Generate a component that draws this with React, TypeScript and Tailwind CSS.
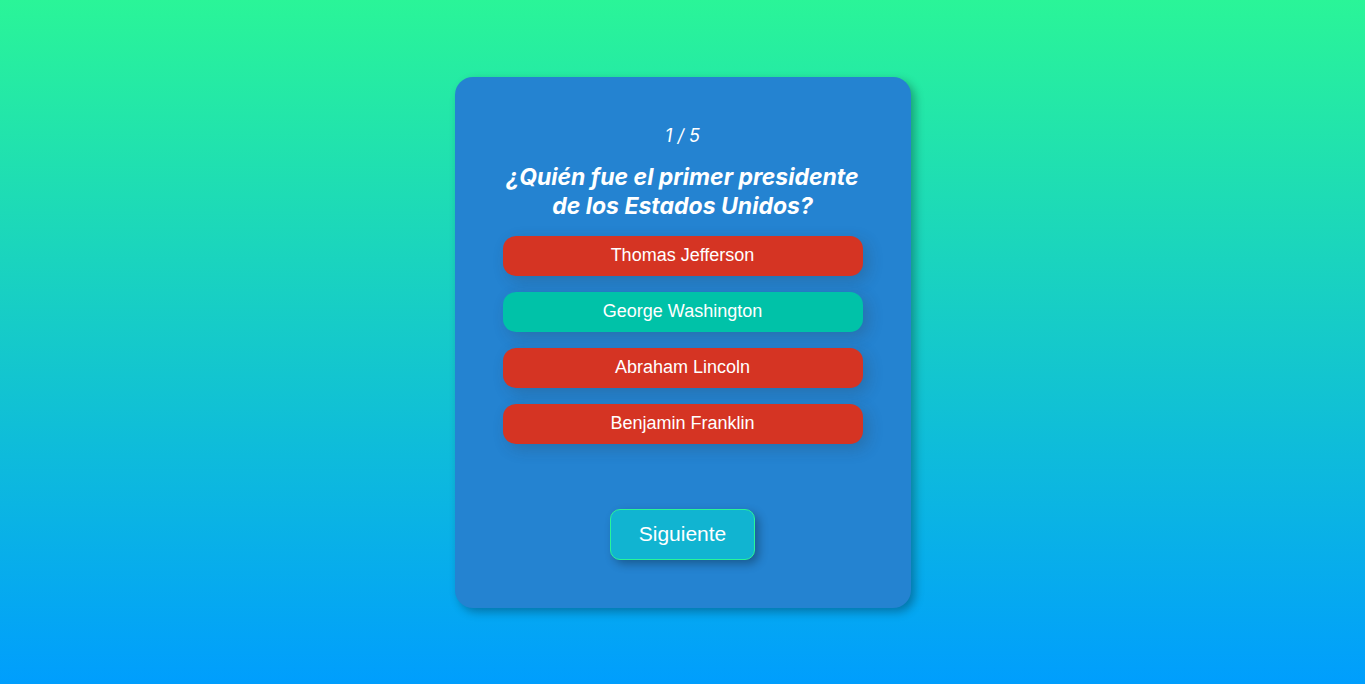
const answers = [
  { text: "Thomas Jefferson", correct: false },
  { text: "George Washington", correct: true },
  { text: "Abraham Lincoln", correct: false },
  { text: "Benjamin Franklin", correct: false },
];

export default function App() {
  return (
    <div className="flex min-h-screen items-center justify-center bg-linear-to-b/srgb from-[#2af598] to-[#009efd] font-['Inter',sans-serif] text-white">
      <main className="flex w-full max-w-[456px] flex-col items-center rounded-[18px] bg-[#2483d1] p-12 shadow-[4px_4px_10px_rgba(0,0,0,0.3)]">
        <p className="text-lg leading-[22px] italic">1 / 5</p>
        <h1 className="mt-4 text-center text-[23px] leading-[29px] font-bold italic">
          ¿Quién fue el primer presidente de los Estados Unidos?
        </h1>
        <div className="mt-[15px] flex w-full flex-col gap-4">
          {answers.map((answer) => (
            <button
              key={answer.text}
              type="button"
              className={`h-10 w-full rounded-[13px] pb-0.5 font-['Liberation_Sans',sans-serif] text-lg shadow-[5px_5px_15px_rgba(51,51,51,0.22)] ${
                answer.correct ? "bg-[#00c2a8]" : "bg-[#d53423]"
              }`}
            >
              {answer.text}
            </button>
          ))}
        </div>
        <button
          type="button"
          className="mt-[65px] rounded-[10px] border border-[#2af598] bg-[#11b4d1] px-7 pt-2 pb-2.5 font-['Liberation_Sans',sans-serif] text-[21px] leading-[31px] shadow-[4px_4px_10px_rgba(0,0,0,0.3)]"
        >
          Siguiente
        </button>
      </main>
    </div>
  );
}
